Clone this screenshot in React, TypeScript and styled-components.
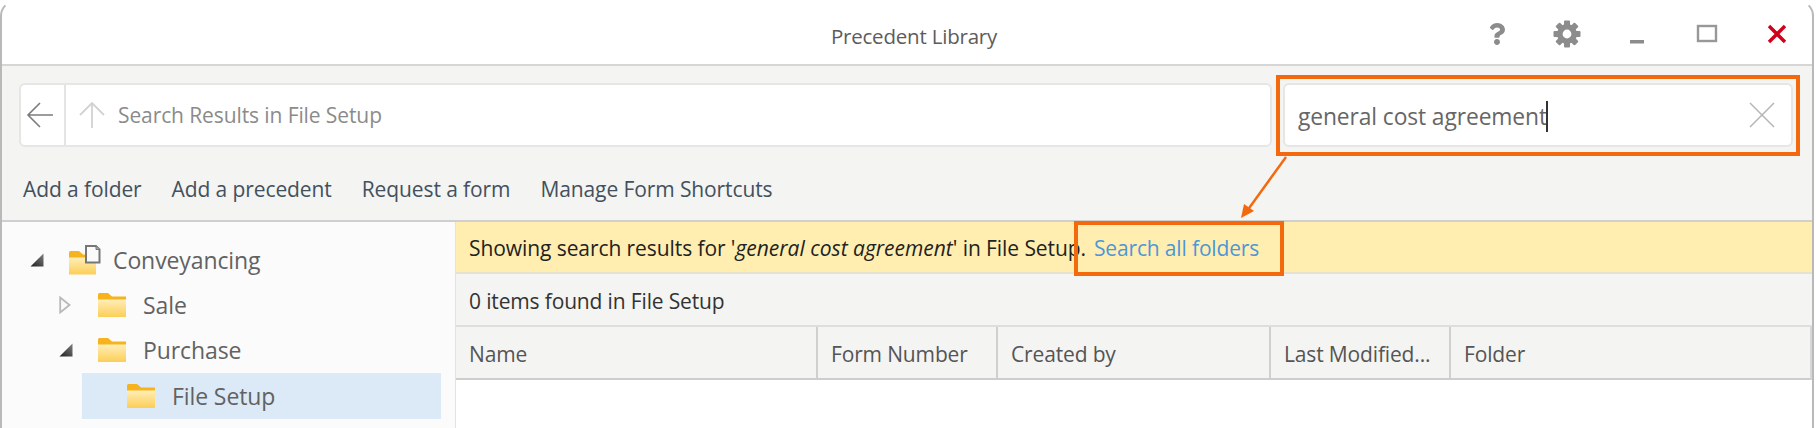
import React from 'react'
import styled, { createGlobalStyle } from 'styled-components'
import { FaQuestion } from 'react-icons/fa'

const GlobalStyle = createGlobalStyle`
  html, body {
    margin: 0;
    height: 428px;
    overflow: hidden;
    background: #fff;
  }
  body {
    font-family: "Open Sans", "Noto Sans", sans-serif;
  }
`

const ORANGE = '#f3690e'

const Window = styled.div`
  position: relative;
  box-sizing: border-box;
  width: 1814px;
  height: 428px;
  overflow: hidden;
  background: #fff;
  border: 2px solid #b9b9b9;
  border-top-color: #fff;
  border-bottom: 0;
  border-radius: 16px 16px 0 0;
`

const TitleBar = styled.header`
  display: flex;
  align-items: center;
  height: 60px;
  padding-top: 2px;
  border-bottom: 2px solid #d6d6d6;
`

const Title = styled.div`
  flex: 1;
  box-sizing: border-box;
  padding-left: 364px;
  padding-top: 4px;
  text-align: center;
  font-size: 20.5px;
  letter-spacing: -0.2px;
  color: #5c5c5c;
`

const Controls = styled.div`
  display: flex;
`

const ControlSlot = styled.div`
  display: flex;
  align-items: center;
  justify-content: center;
  width: 70px;
  height: 40px;
  color: #8c8c8c;
`

const Toolbar = styled.section`
  box-sizing: border-box;
  height: 154px;
  padding: 17px 19px 0 17px;
  background: #f4f4f2;
`

const NavRow = styled.div`
  display: flex;
  gap: 11px;
  height: 64px;
`

const FieldBox = styled.div`
  position: relative;
  box-sizing: border-box;
  display: flex;
  align-items: center;
  background: #fff;
  border: 2px solid #e6e6e6;
  border-radius: 6px;
`

const Breadcrumb = styled(FieldBox)`
  flex: 1;
`

const BackCell = styled.div`
  display: flex;
  align-items: center;
  justify-content: center;
  align-self: stretch;
  box-sizing: border-box;
  width: 45px;
  padding-right: 6px;
  border-right: 2px solid #e4e4e4;
`

const UpCell = styled.div`
  display: flex;
  padding: 0 13px 0 13px;
`

const PathText = styled.span`
  font-size: 21px;
  letter-spacing: -0.1px;
  color: #8b8b8b;
`

const SearchBox = styled(FieldBox)`
  width: 510px;
  padding: 0 16px 0 13px;
`

const SearchValue = styled.span`
  flex: 1;
  display: flex;
  align-items: center;
  padding-top: 2px;
  font-size: 22.8px;
  letter-spacing: -0.1px;
  color: #666;
`

const Caret = styled.i`
  display: inline-block;
  width: 2px;
  height: 31px;
  margin-left: -1px;
  background: #333;
`

const Callout = styled.div`
  position: absolute;
  box-sizing: border-box;
  border: 4px solid ${ORANGE};
  pointer-events: none;
`

const SearchCallout = styled(Callout)`
  inset: -10px -9px -11px -9px;
`

const ActionRow = styled.nav`
  display: flex;
  gap: 30px;
  padding: 28px 0 0 4px;
  font-size: 21px;
  letter-spacing: -0.1px;
  color: #43505e;
`

const Body = styled.main`
  display: flex;
  height: 208px;
  border-top: 2px solid #cfcfcf;
`

const TreePanel = styled.aside`
  box-sizing: border-box;
  width: 454px;
  padding-top: 15px;
  overflow: hidden;
  background: #fbfbfb;
  border-right: 1px solid #e2e2e2;
`

const TreeRow = styled.div<{ $level: number; $selected?: boolean }>`
  display: flex;
  align-items: center;
  height: 45.4px;
  margin: 0 14px 0 ${(p) => 22 + 29 * p.$level}px;
  padding-left: 6px;
  background: ${(p) => (p.$selected ? '#dceaf8' : 'transparent')};
`

const ToggleCell = styled.span`
  display: flex;
  align-items: center;
  width: 39px;
  flex: none;
`

const NodeIcon = styled.span<{ $root?: boolean }>`
  display: flex;
  width: ${(p) => (p.$root ? 44 : 45)}px;
  flex: none;
`

const NodeLabel = styled.span`
  font-size: 23px;
  letter-spacing: -0.1px;
  color: #626262;
`

const Results = styled.section`
  flex: 1;
  min-width: 0;
  display: flex;
  flex-direction: column;
  background: #fff;
`

const Banner = styled.div`
  display: flex;
  align-items: center;
  box-sizing: border-box;
  height: 52px;
  padding: 2px 0 0 13px;
  background: #ffeeb0;
  border-bottom: 2px solid #e6e2cf;
  font-size: 21px;
  letter-spacing: -0.08px;
  color: #222;
  white-space: pre;

  em {
    letter-spacing: 0;
  }
`

const SearchLink = styled.a`
  position: relative;
  margin-left: 8px;
  letter-spacing: -0.15px;
  color: #4c97d8;
`

const LinkCallout = styled(Callout)`
  inset: -13px -25px -14px -20px;
`

const CountRow = styled.div`
  display: flex;
  align-items: center;
  box-sizing: border-box;
  height: 53px;
  padding: 2px 0 0 13px;
  background: #f4f4f2;
  border-bottom: 2px solid #dedede;
  font-size: 21px;
  letter-spacing: -0.15px;
  color: #333;
`

const GridHeader = styled.div`
  display: grid;
  grid-template-columns: 362px 180px 273px 180px 1fr;
  box-sizing: border-box;
  height: 53px;
  background: #f4f4f3;
  border-bottom: 2px solid #cdcdcd;
  border-right: 2px solid #d6d6d6;
`

const HeaderCell = styled.div`
  display: flex;
  align-items: center;
  box-sizing: border-box;
  padding: 2px 0 0 13px;
  border-right: 2px solid #d0d0d0;
  font-size: 21px;
  letter-spacing: -0.15px;
  color: #555;

  &:last-child {
    border-right: 0;
  }
`

const Pointer = styled.svg`
  position: absolute;
  left: 1232px;
  top: 152px;
`

const Gear = () => (
  <svg width="28" height="28" viewBox="0 0 28 28">
    {[0, 45, 90, 135, 180, 225, 270, 315].map((deg) => (
      <rect key={deg} x="11" y="0.5" width="6" height="7" rx="1" fill="#8c8c8c" transform={`rotate(${deg} 14 14)`} />
    ))}
    <circle cx="14" cy="14" r="7.2" fill="none" stroke="#8c8c8c" strokeWidth="5.6" />
  </svg>
)

const Folder = () => (
  <svg width="28" height="24" viewBox="0 0 28 24">
    <defs>
      <linearGradient id="fold" x1="0" y1="0" x2="0" y2="1">
        <stop offset="0" stopColor="#ffeeb8" />
        <stop offset="1" stopColor="#fcce57" />
      </linearGradient>
    </defs>
    <path d="M0 1.5 Q0 0 1.5 0 H10 L14 3.5 H28 V8 H0 Z" fill="#f6b31d" />
    <rect x="0" y="6.5" width="28" height="17.5" fill="url(#fold)" />
  </svg>
)

const RootFolder = () => (
  <svg width="32" height="30" viewBox="0 0 32 30">
    <path d="M0 7.5 Q0 6 1.5 6 H10 L14 9.5 H27 V14 H0 Z" fill="#f6b31d" />
    <rect x="0" y="12.5" width="27" height="17" fill="url(#fold)" />
    <path d="M17 1 H27 L30.5 4.5 V17.5 H17 Z" fill="#fafafa" stroke="#777" strokeWidth="2" />
    <path d="M27 1 V4.5 H30.5" fill="#aaa" stroke="#777" strokeWidth="1" />
  </svg>
)

const OpenToggle = () => (
  <svg width="14" height="14" viewBox="0 0 14 14">
    <defs>
      <linearGradient id="tri" x1="0" y1="1" x2="1" y2="0">
        <stop offset="0" stopColor="#1f1f1f" />
        <stop offset="1" stopColor="#808080" />
      </linearGradient>
    </defs>
    <path d="M13.5 0.5 V13.5 H0.5 Z" fill="url(#tri)" />
  </svg>
)

const ClosedToggle = () => (
  <svg width="12" height="18" viewBox="0 0 12 18">
    <path d="M1.2 1.5 L10.5 9 L1.2 16.5 Z" fill="#fbfbfb" stroke="#b9b9b9" strokeWidth="1.8" />
  </svg>
)

const columns = ['Name', 'Form Number', 'Created by', 'Last Modified...', 'Folder']
const actions = ['Add a folder', 'Add a precedent', 'Request a form', 'Manage Form Shortcuts']

export default function App() {
  return (
    <>
      <GlobalStyle />
      <Window>
        <TitleBar>
          <Title>Precedent Library</Title>
          <Controls>
            <ControlSlot>
              <FaQuestion size={22} />
            </ControlSlot>
            <ControlSlot>
              <Gear />
            </ControlSlot>
            <ControlSlot>
              <svg width="20" height="24" viewBox="0 0 20 24">
                <rect x="3" y="18" width="14" height="3.5" fill="#8c8c8c" />
              </svg>
            </ControlSlot>
            <ControlSlot>
              <svg width="22" height="20" viewBox="0 0 22 20">
                <rect x="2" y="2" width="18" height="15" fill="none" stroke="#989898" strokeWidth="2.4" />
              </svg>
            </ControlSlot>
            <ControlSlot>
              <svg width="20" height="20" viewBox="0 0 20 20">
                <path d="M2 2 L18 18 M18 2 L2 18" stroke="#d0021b" strokeWidth="3.4" />
              </svg>
            </ControlSlot>
          </Controls>
        </TitleBar>

        <Toolbar>
          <NavRow>
            <Breadcrumb>
              <BackCell>
                <svg width="28" height="26" viewBox="0 0 28 26">
                  <path d="M27 13 H2 M14 1 L2 13 L14 25" fill="none" stroke="#7c7c7c" strokeWidth="1.6" />
                </svg>
              </BackCell>
              <UpCell>
                <svg width="26" height="26" viewBox="0 0 26 26">
                  <path d="M13 26 V1 M1 13 L13 1 L25 13" fill="none" stroke="#d2d2d2" strokeWidth="1.8" />
                </svg>
              </UpCell>
              <PathText>Search Results in File Setup</PathText>
            </Breadcrumb>
            <SearchBox>
              <SearchValue>
                general cost agreement
                <Caret />
              </SearchValue>
              <svg width="26" height="26" viewBox="0 0 26 26">
                <path d="M1 1 L25 25 M25 1 L1 25" stroke="#b5b5b5" strokeWidth="1.5" />
              </svg>
              <SearchCallout />
            </SearchBox>
          </NavRow>
          <ActionRow>
            {actions.map((a) => (
              <span key={a}>{a}</span>
            ))}
          </ActionRow>
        </Toolbar>

        <Body>
          <TreePanel>
            <TreeRow $level={0}>
              <ToggleCell>
                <OpenToggle />
              </ToggleCell>
              <NodeIcon $root>
                <RootFolder />
              </NodeIcon>
              <NodeLabel>Conveyancing</NodeLabel>
            </TreeRow>
            <TreeRow $level={1}>
              <ToggleCell>
                <ClosedToggle />
              </ToggleCell>
              <NodeIcon>
                <Folder />
              </NodeIcon>
              <NodeLabel>Sale</NodeLabel>
            </TreeRow>
            <TreeRow $level={1}>
              <ToggleCell>
                <OpenToggle />
              </ToggleCell>
              <NodeIcon>
                <Folder />
              </NodeIcon>
              <NodeLabel>Purchase</NodeLabel>
            </TreeRow>
            <TreeRow $level={2} $selected>
              <ToggleCell />
              <NodeIcon>
                <Folder />
              </NodeIcon>
              <NodeLabel>File Setup</NodeLabel>
            </TreeRow>
            <TreeRow $level={2}>
              <ToggleCell />
              <NodeIcon>
                <Folder />
              </NodeIcon>
            </TreeRow>
          </TreePanel>

          <Results>
            <Banner>
              Showing search results for '<em>general cost agreement</em>' in File Setup.
              <SearchLink>
                Search all folders
                <LinkCallout />
              </SearchLink>
            </Banner>
            <CountRow>0 items found in File Setup</CountRow>
            <GridHeader>
              {columns.map((c) => (
                <HeaderCell key={c}>{c}</HeaderCell>
              ))}
            </GridHeader>
          </Results>
        </Body>

        <Pointer width="60" height="66" viewBox="0 0 60 66">
          <path d="M52 3 L13 57" stroke={ORANGE} strokeWidth="2.4" />
          <path d="M7 64 L10 50 L20 57 Z" fill={ORANGE} />
        </Pointer>
      </Window>
    </>
  )
}
